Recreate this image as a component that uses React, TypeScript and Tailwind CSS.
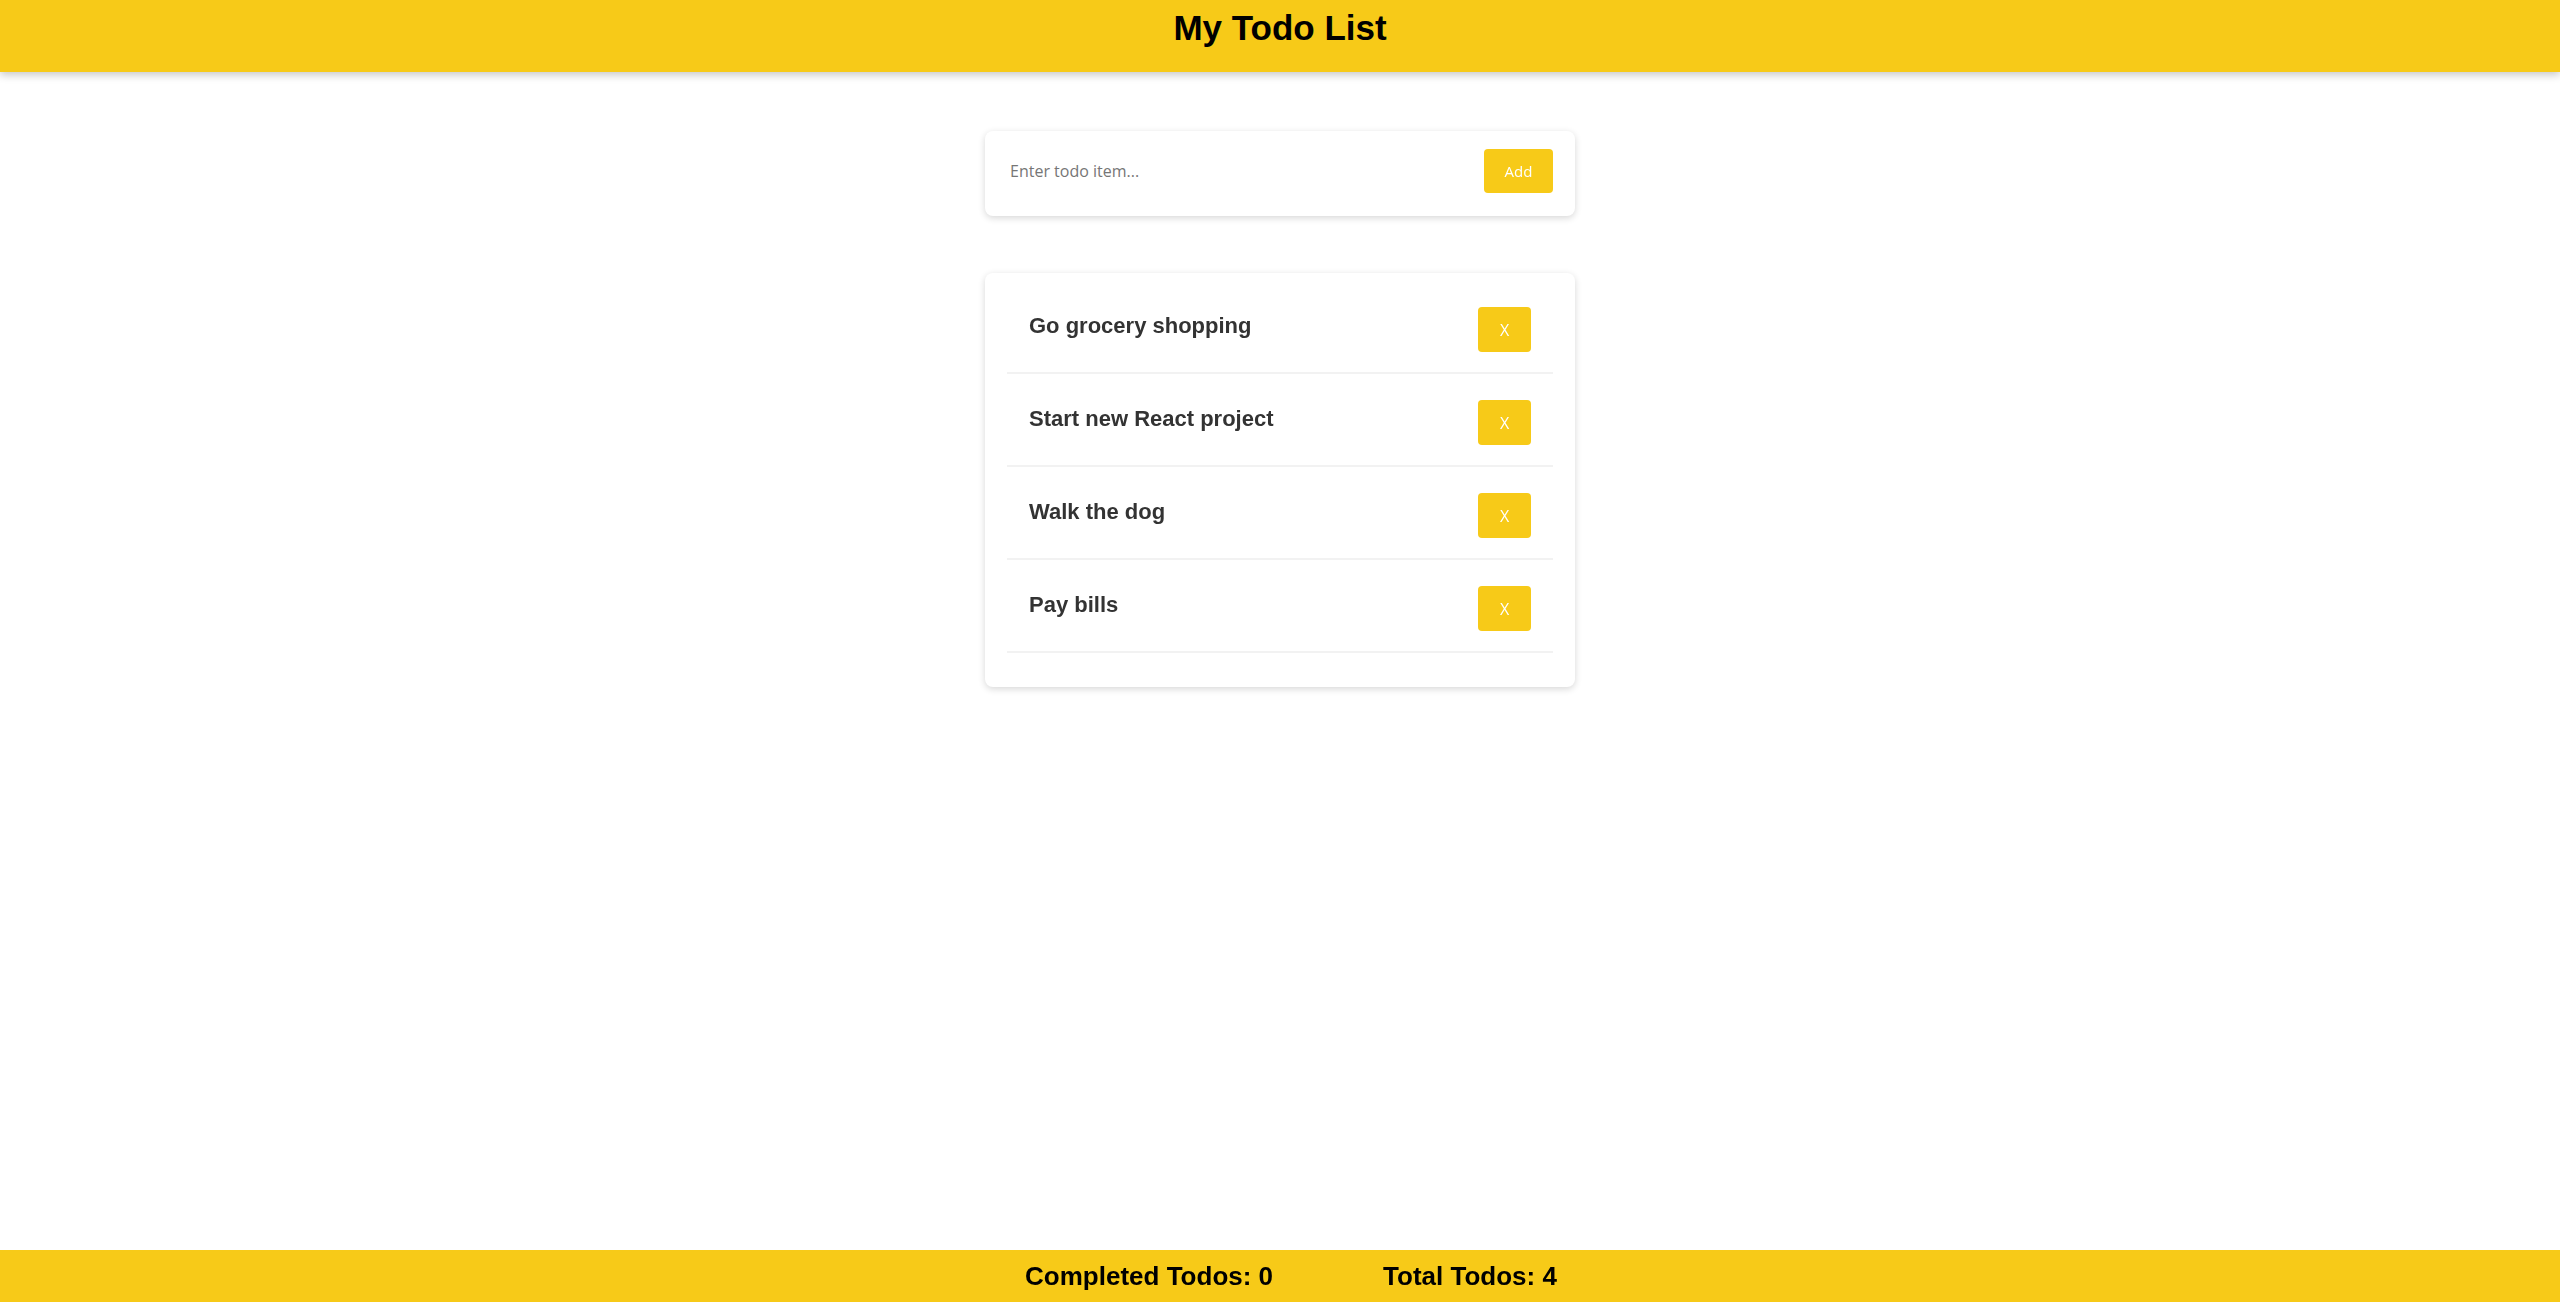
import React, { useState } from 'react';

type Todo = {
  id: number;
  text: string;
  completed: boolean;
};

const initialTodos: Todo[] = [
  { id: 1, text: 'Go grocery shopping', completed: false },
  { id: 2, text: 'Start new React project', completed: false },
  { id: 3, text: 'Walk the dog', completed: false },
  { id: 4, text: 'Pay bills', completed: false },
];

const App = () => {
  const [todos, setTodos] = useState<Todo[]>(initialTodos);
  const [value, setValue] = useState('');

  const addTodo = () => {
    if (!value.trim()) return;
    setTodos([...todos, { id: Date.now(), text: value.trim(), completed: false }]);
    setValue('');
  };

  const removeTodo = (id: number) => {
    setTodos(todos.filter((t) => t.id !== id));
  };

  const completed = todos.filter((t) => t.completed).length;

  return (
    <div className="flex min-h-screen flex-col bg-white font-['Liberation_Sans',Arial,sans-serif]">
      {/* Header */}
      <header className="relative z-10 flex h-[72px] justify-center bg-[#f7ca18] pt-[8px] shadow-[0_3px_8px_rgba(0,0,0,0.22)]">
        <h1 className="text-[35px] font-bold leading-[40px] text-black">My Todo List</h1>
      </header>

      <main className="flex flex-1 flex-col items-center pt-[59px]">
        {/* Input card */}
        <div className="flex h-[85px] w-[590px] items-start rounded-[8px] bg-white px-[22px] pt-[18px] shadow-[0_2px_7px_rgba(0,0,0,0.16)]">
          <input
            autoFocus
            value={value}
            onChange={(e) => setValue(e.target.value)}
            onKeyDown={(e) => e.key === 'Enter' && addTodo()}
            placeholder="Enter todo item..."
            className="h-[44px] flex-1 bg-transparent px-[3px] font-['Open_Sans',sans-serif] text-[16px] text-[#333] outline-none placeholder:text-[#767676]"
          />
          <button
            onClick={addTodo}
            className="h-[44px] w-[69px] rounded-[4px] bg-[#f7ca18] font-['Open_Sans',sans-serif] text-[15px] text-white"
          >
            Add
          </button>
        </div>

        {/* Todo list */}
        <ul className="mt-[57px] w-[590px] rounded-[8px] bg-white pt-[8px] pb-[34px] shadow-[0_2px_7px_rgba(0,0,0,0.16)]">
          {todos.map((todo) => (
            <li
              key={todo.id}
              className="mx-[22px] flex items-center justify-between border-b-2 border-[#f2f2f2] px-[22px] pt-[26px] pb-[20px]"
            >
              <span className="mb-[8px] text-[22px] font-bold text-[#333]">{todo.text}</span>
              <button
                onClick={() => removeTodo(todo.id)}
                className="h-[45px] w-[53px] rounded-[4px] bg-[#f7ca18] font-['Open_Sans',sans-serif] text-[16px] text-white"
              >
                X
              </button>
            </li>
          ))}
        </ul>
      </main>

      {/* Footer */}
      <footer className="flex h-[52px] items-center justify-center gap-[110px] bg-[#f7ca18] pl-[22px]">
        <span className="text-[26px] font-bold text-black">Completed Todos: {completed}</span>
        <span className="text-[26px] font-bold text-black">Total Todos: {todos.length}</span>
      </footer>
    </div>
  );
};

export default App;
